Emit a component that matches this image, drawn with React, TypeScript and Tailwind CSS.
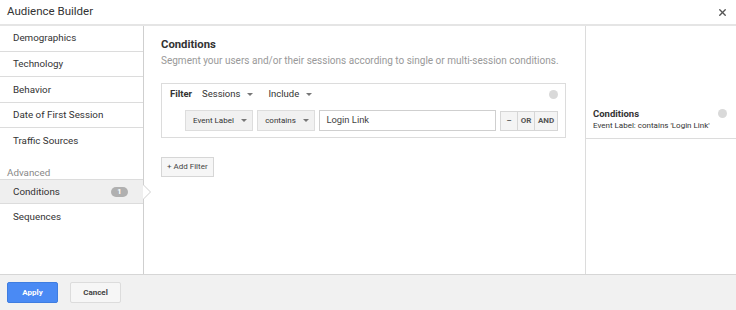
import { X } from "lucide-react";

const NAV = ["Demographics", "Technology", "Behavior", "Date of First Session", "Traffic Sources"];

function Caret() {
  return <span className="ml-[7px] inline-block h-0 w-0 border-x-[3px] border-t-[3px] border-x-transparent border-t-[#777] align-middle" />;
}

function RemoveDot() {
  return <span className="inline-block h-[9px] w-[9px] rounded-full bg-[#d9d9d9]" />;
}

export default function App() {
  return (
    <div className="flex h-[310px] w-[736px] flex-col bg-white font-['Roboto',sans-serif] text-[#333]">
      {/* Header */}
      <div className="flex h-[26px] shrink-0 items-center justify-between border-b-2 border-[#e5e5e5] pl-[7px] pr-[8px]">
        <span className="text-[11.5px] text-[#333]">Audience Builder</span>
        <X size={11} strokeWidth={3} className="text-[#555]" />
      </div>

      {/* Body */}
      <div className="flex min-h-0 flex-1">
        {/* Sidebar */}
        <div className="relative w-[144px] shrink-0 border-r border-[#cfcfcf]">
          {NAV.map((item, i) => (
            <div
              key={item}
              className={`flex h-[25.6px] items-center pl-[13px] pt-[1px] text-[9.8px] text-[#333] ${i < NAV.length - 1 ? "border-b border-[#dcdcdc]" : ""}`}
            >
              {item}
            </div>
          ))}
          <div className="h-[25px] pl-[7px] pt-[13px] text-[9.8px] leading-[12px] text-[#888]">Advanced</div>
          <div className="relative flex h-[25px] items-center justify-between border-y border-[#dcdcdc] bg-[#efefef] pl-[13px] pr-[15px] pt-[1px] text-[9.8px]">
            <span>Conditions</span>
            <span className="flex h-[10px] w-[17px] items-center justify-center rounded-full bg-[#b0b0b0] text-[7.5px] font-bold text-white">1</span>
            <span className="absolute right-[-8px] top-[4px] h-0 w-0 border-y-[8px] border-l-[8px] border-y-transparent border-l-[#cfcfcf]" />
            <span className="absolute right-[-7px] top-[5px] h-0 w-0 border-y-[7px] border-l-[7px] border-y-transparent border-l-white" />
          </div>
          <div className="flex h-[25px] items-center pl-[13px] pt-[1px] text-[9.8px]">Sequences</div>
        </div>

        {/* Main */}
        <div className="flex-1 pl-[17px] pt-[11px]">
          <div className="text-[11.3px] font-bold leading-[15px] text-[#333]">Conditions</div>
          <div className="mt-[1px] whitespace-nowrap text-[10px] text-[#999]">
            Segment your users and/or their sessions according to single or multi-session conditions.
          </div>

          <div className="mt-[15px] w-[405px] border border-[#dcdcdc] pb-[6px] pl-[8px] pr-[7px] pt-[3px]">
            <div className="flex h-[14px] items-center justify-between">
              <div className="flex items-center text-[9.5px]">
                <span className="font-bold">Filter</span>
                <span className="ml-[10px]">Sessions</span>
                <Caret />
                <span className="ml-[15px]">Include</span>
                <Caret />
              </div>
              <RemoveDot />
            </div>
            <div className="mt-[9px] flex items-center pl-[15px]">
              <div className="flex h-[21px] w-[69px] items-center border border-[#ddd] bg-[#f1f1f1] pl-[7px] text-[8px] text-[#333]">
                Event Label<Caret />
              </div>
              <div className="ml-[4px] flex h-[21px] w-[59px] items-center border border-[#ddd] bg-[#f1f1f1] pl-[7px] text-[8px] text-[#333]">
                contains<Caret />
              </div>
              <div className="ml-[4px] flex h-[21px] w-[179px] items-center border border-[#cfcfcf] bg-white pl-[6px] text-[9.4px] text-[#444]">
                Login Link
              </div>
              <div className="ml-[4px] flex h-[20px] border border-[#d6d6d6] bg-[#f4f4f4] text-[8px] font-bold text-[#555]">
                <span className="flex w-[17px] items-center justify-center border-r border-[#d6d6d6]">–</span>
                <span className="flex w-[17px] items-center justify-center border-r border-[#d6d6d6]">OR</span>
                <span className="flex w-[22px] items-center justify-center">AND</span>
              </div>
            </div>
          </div>

          <button className="mt-[19px] flex h-[20px] items-center border border-[#d6d6d6] bg-[#f6f6f6] px-[5px] text-[8px] text-[#444]">
            + Add Filter
          </button>
        </div>

        {/* Summary */}
        <div className="w-[151px] shrink-0 border-l border-[#dcdcdc]">
          <div className="mt-[81px] border-b border-[#dcdcdc] pb-[7px] pl-[7px] pr-[9px]">
            <div className="flex items-center justify-between">
              <span className="text-[9.5px] font-bold leading-[13px] text-[#333]">Conditions</span>
              <RemoveDot />
            </div>
            <div className="mt-[1px] text-[8px] leading-[10px] text-[#333]">Event Label: contains 'Login Link'</div>
          </div>
        </div>
      </div>

      {/* Footer */}
      <div className="flex h-[36px] shrink-0 items-center border-t border-[#d6d6d6] bg-[#f1f1f1] pl-[7px]">
        <button className="h-[21px] w-[51px] rounded-[2px] border border-[#3f7de0] bg-[#4a8af4] text-[8px] font-bold text-white">
          Apply
        </button>
        <button className="ml-[12px] h-[21px] w-[51px] rounded-[2px] border border-[#dcdcdc] bg-[#f6f6f6] text-[8px] font-bold text-[#444]">
          Cancel
        </button>
      </div>
    </div>
  );
}
